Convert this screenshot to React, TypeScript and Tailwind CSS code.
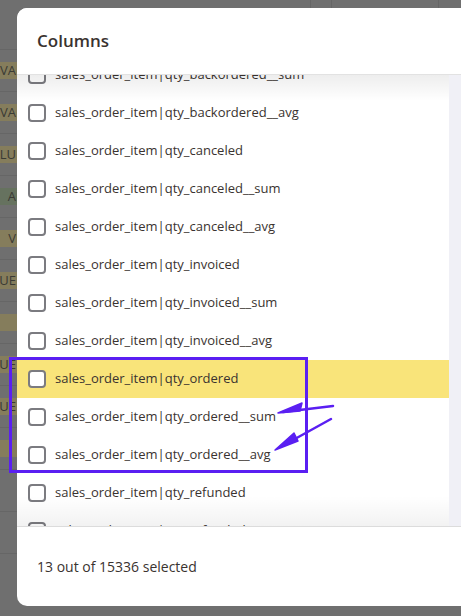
import React from 'react';

const ROWS = [
  'sales_order_item|qty_backordered__sum',
  'sales_order_item|qty_backordered__avg',
  'sales_order_item|qty_canceled',
  'sales_order_item|qty_canceled__sum',
  'sales_order_item|qty_canceled__avg',
  'sales_order_item|qty_invoiced',
  'sales_order_item|qty_invoiced__sum',
  'sales_order_item|qty_invoiced__avg',
  'sales_order_item|qty_ordered',
  'sales_order_item|qty_ordered__sum',
  'sales_order_item|qty_ordered__avg',
  'sales_order_item|qty_refunded',
  'sales_order_item|qty_refunded__sum',
];

// background cells peeking out at the left edge
const BG_CELLS: { label: string; tone: string }[] = [
  { label: '', tone: '' },
  { label: 'VA', tone: 'bg-[#857d5c]' },
  { label: 'VA', tone: 'bg-[#857d5c]' },
  { label: 'ALU', tone: 'bg-[#857d5c]' },
  { label: 'A', tone: 'bg-[#66725f]' },
  { label: 'V', tone: 'bg-[#857d5c]' },
  { label: 'UE', tone: 'bg-[#857d5c]' },
  { label: '', tone: 'bg-[#857d5c]' },
  { label: 'LUE', tone: 'bg-[#857d5c]' },
  { label: 'UE', tone: 'bg-[#857d5c]' },
  { label: '', tone: 'bg-[#857d5c]' },
  { label: '', tone: '' },
  { label: '', tone: '' },
];

function Checkbox() {
  return <span className="w-[18px] h-[18px] rounded-[4px] border-2 border-[#7b7b80] bg-white flex-shrink-0" />;
}

export default function App() {
  return (
    <div className="relative w-[461px] h-[616px] overflow-hidden bg-[#6f6f6f]" style={{ fontFamily: '"Open Sans", "Noto Sans", sans-serif' }}>
      {/* dimmed page behind the dialog */}
      <div className="flex flex-col">
        <div className="h-[8px] flex">
          <div className="w-[311px] border-r border-[#656565]" />
          <div className="w-[21px] border-r border-[#656565]" />
          <div className="w-[107px] border-r border-[#656565]" />
        </div>
        {BG_CELLS.map((c, i) => (
          <div key={i} className="h-[42px] flex items-center border-b border-[#666] text-[13px] text-[#3a3a34]">
            {c.tone && (
              <span className={`h-[17px] w-[30px] -ml-[12px] flex items-center justify-end pr-[2px] ${c.tone}`}>{c.label}</span>
            )}
          </div>
        ))}
      </div>

      {/* dialog */}
      <div className="absolute left-[17px] top-[8px] w-[444px] h-[598px] bg-white rounded-l-[10px] flex flex-col overflow-hidden">
        <div className="h-[67px] flex items-center pl-[20px] pb-[1px] border-b border-[#e2e2e2] flex-shrink-0 relative z-10 bg-white">
          <span className="text-[17px] font-semibold text-[#3a3330]">Columns</span>
        </div>
        <div className="relative h-[451px] flex overflow-hidden">
          <div className="flex-1 relative">
            <div className="-mt-[19px]">
              {ROWS.map((r, i) => (
                <div
                  key={r}
                  className={`h-[38px] flex items-center gap-[9px] pl-[11px] text-[13px] text-[#3a3330] ${i === 8 ? 'bg-[#f9e47a]' : ''}`}
                >
                  <Checkbox />
                  <span>{r}</span>
                </div>
              ))}
            </div>
            <div className="absolute left-0 right-0 top-0 h-[26px] bg-gradient-to-b from-black/[0.07] to-transparent" />
            <div className="absolute left-0 right-0 bottom-0 h-[30px] bg-gradient-to-b from-transparent to-black/[0.05]" />
          </div>
          <div className="w-[12px] bg-[#f0f0f6]" />
        </div>
        <div className="flex-1 border-t border-[#dcdcdc] flex items-center pl-[20px] pb-[1px]">
          <span className="text-[14px] text-[#3a3330]">13 out of 15336 selected</span>
        </div>
      </div>

      {/* annotation */}
      <svg className="absolute left-0 top-0" width="461" height="616" viewBox="0 0 461 616">
        <rect x="10.5" y="358.5" width="296" height="113" fill="none" stroke="#5a1ff2" strokeWidth="3" />
        <path d="M333 406 L283 412" stroke="#5a1ff2" strokeWidth="2.5" strokeLinecap="round" />
        <path d="M278 413 L302 403 L300 411 Z" fill="#5a1ff2" stroke="#5a1ff2" strokeWidth="1.5" strokeLinejoin="round" />
        <path d="M331 419 L284 445" stroke="#5a1ff2" strokeWidth="2.5" strokeLinecap="round" />
        <path d="M275 450 L294 433 L298 441 Z" fill="#5a1ff2" stroke="#5a1ff2" strokeWidth="1.5" strokeLinejoin="round" />
      </svg>
    </div>
  );
}
